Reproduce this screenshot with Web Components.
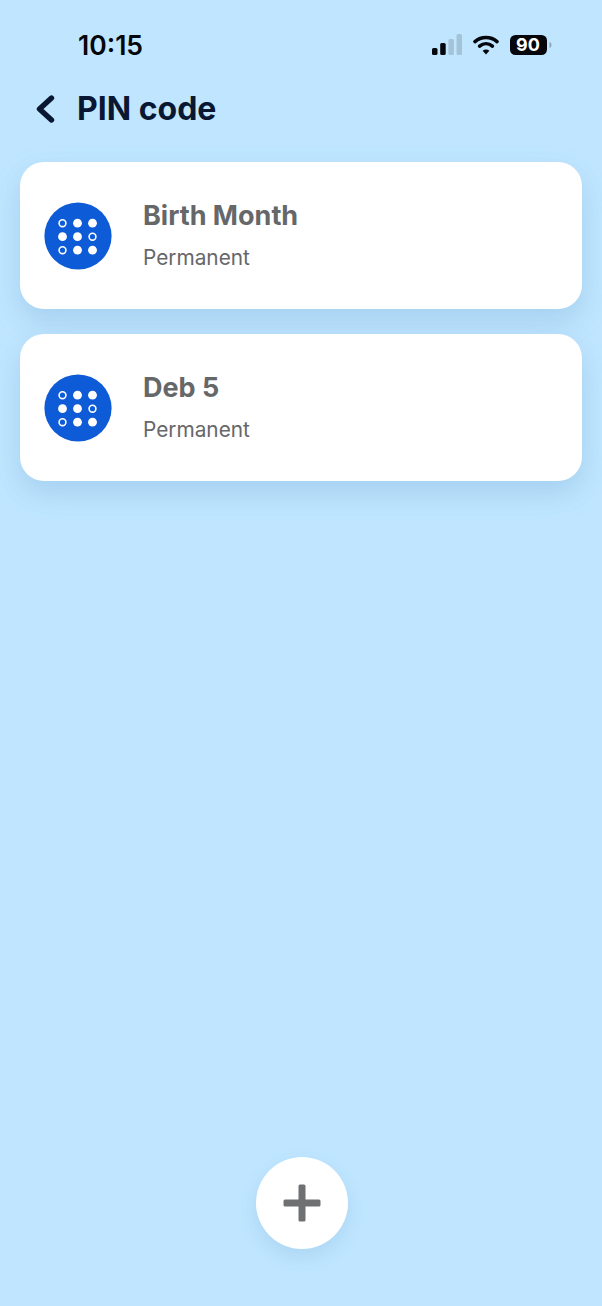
<!doctype html>
<html>
<head>
<meta charset="UTF-8" />
<style>
  html, body { margin: 0; height: 100%; }
  body { background: #c0e6ff; font-family: Inter, "Liberation Sans", sans-serif; }
</style>
</head>
<body>
<pin-screen>
  <status-bar slot="status" time="10:15" battery="90"></status-bar>
  <title-bar slot="title">PIN code</title-bar>
  <pin-card name="Birth Month" note="Permanent"></pin-card>
  <pin-card name="Deb 5" note="Permanent"></pin-card>
  <add-button slot="action"></add-button>
</pin-screen>

<script>
'use strict'

class PinScreen extends HTMLElement {
  constructor() {
    super();
    this.attachShadow({ mode: 'open' }).innerHTML = `
      <style>
        :host { display: flex; flex-direction: column; height: 1306px; box-sizing: border-box; padding-bottom: 57px; }
        .list { display: flex; flex-direction: column; gap: 25px; padding: 0 20px; }
        .action { margin-top: auto; display: flex; justify-content: center; padding-left: 2px; }
      </style>
      <slot name="status"></slot>
      <slot name="title"></slot>
      <div class="list"><slot></slot></div>
      <div class="action"><slot name="action"></slot></div>`;
  }
}

class StatusBar extends HTMLElement {
  constructor() {
    super();
    this.attachShadow({ mode: 'open' }).innerHTML = `
      <style>
        :host { display: flex; align-items: center; height: 30px; padding: 30px 50px 0 78px; color: #05070c; }
        .time { font-size: 26.5px; font-weight: 600; line-height: 30px; }
        .icons { margin-left: auto; display: flex; align-items: center; }
        svg { display: block; }
        .wifi { margin-left: 11px; }
        .battery { position: relative; margin-left: 11px; width: 42px; height: 20px; }
        .level { position: absolute; inset: 0; display: flex; align-items: center; justify-content: center;
                 padding-right: 6px; box-sizing: border-box; color: #fff; font: 700 18px/20px Inter, "Liberation Sans", sans-serif; }
      </style>
      <div class="time"></div>
      <div class="icons">
        <svg width="30" height="22" viewBox="0 0 30 22">
          <rect x="0" y="14" width="5.5" height="7" rx="1.5" fill="#05070c"/>
          <rect x="8.2" y="9" width="5.5" height="12" rx="1.5" fill="#05070c"/>
          <rect x="16.4" y="5" width="5.5" height="16" rx="1.5" fill="#a5c3d8"/>
          <rect x="24.5" y="0" width="5.5" height="21" rx="1.5" fill="#a5c3d8"/>
        </svg>
        <svg class="wifi" width="26" height="20" viewBox="0 0 26 20" fill="none" stroke="#05070c" stroke-width="3.6" stroke-linecap="round">
          <path d="M2 6.6C8.2 1.2 17.8 1.2 24 6.6"/>
          <path d="M6.6 11.2C10.4 8 15.6 8 19.4 11.2"/>
          <path d="M13 19.4L9.6 15.8C11.6 14.2 14.4 14.2 16.4 15.8Z" fill="#05070c" stroke="none"/>
        </svg>
        <div class="battery">
          <svg width="42" height="20" viewBox="0 0 42 20">
            <rect x="0" y="0" width="37" height="20" rx="5.5" fill="#05070c"/>
            <path d="M39.5 7C41 7.6 41.5 8.6 41.5 10C41.5 11.4 41 12.4 39.5 13Z" fill="#8fa3b2"/>
          </svg>
          <div class="level"></div>
        </div>
      </div>`;
  }
  connectedCallback() {
    this.shadowRoot.querySelector('.time').textContent = this.getAttribute('time');
    this.shadowRoot.querySelector('.level').textContent = this.getAttribute('battery');
  }
}

class TitleBar extends HTMLElement {
  constructor() {
    super();
    this.attachShadow({ mode: 'open' }).innerHTML = `
      <style>
        :host { display: flex; align-items: center; height: 38px; padding: 30px 0 34px 36px; color: #0a1733; }
        svg { display: block; }
        .text { margin-left: 22px; font-size: 32px; font-weight: 700; line-height: 38px; }
      </style>
      <svg width="19" height="28" viewBox="0 0 19 28" fill="none" stroke="#0a1733" stroke-width="5.4" stroke-linecap="round" stroke-linejoin="round">
        <path d="M15.5 3L3.5 14L15.5 25"/>
      </svg>
      <div class="text"><slot></slot></div>`;
  }
}

// 3x3 grid of the pin pad, some of the dots are rings
const PAD_RINGS = [0, 5, 6];

class PinIcon extends HTMLElement {
  constructor() {
    super();
    let dots = '';
    for (let i = 0; i < 9; i++) {
      const cx = 18.5 + (i % 3) * 15;
      const cy = 21.2 + Math.floor(i / 3) * 13.5;
      dots += PAD_RINGS.includes(i)
        ? `<circle cx="${cx}" cy="${cy}" r="3.4" fill="none" stroke="#fff" stroke-width="1.6"/>`
        : `<circle cx="${cx}" cy="${cy}" r="4.4" fill="#fff"/>`;
    }
    this.attachShadow({ mode: 'open' }).innerHTML = `
      <style>
        :host { display: block; width: 68px; height: 68px; flex: none; }
        svg { display: block; }
      </style>
      <svg width="68" height="68" viewBox="0 0 68 68">
        <circle cx="34" cy="34" r="33.6" fill="#0d5bd7"/>
        ${dots}
      </svg>`;
  }
}

class PinCard extends HTMLElement {
  constructor() {
    super();
    this.attachShadow({ mode: 'open' }).innerHTML = `
      <style>
        :host { display: flex; align-items: center; height: 147px; box-sizing: border-box; padding-left: 24px;
                background: #fff; border-radius: 24px; box-shadow: 0 12px 28px rgba(70, 130, 180, 0.22); }
        .text { margin-left: 31px; padding-bottom: 2px; color: #666769; display: flex; flex-direction: column; }
        .name { font-size: 27px; font-weight: 700; line-height: 32px; }
        .note { margin-top: 14px; font-size: 20.8px; line-height: 24px; }
      </style>
      <pin-icon></pin-icon>
      <div class="text"><div class="name"></div><div class="note"></div></div>`;
  }
  connectedCallback() {
    this.shadowRoot.querySelector('.name').textContent = this.getAttribute('name');
    this.shadowRoot.querySelector('.note').textContent = this.getAttribute('note');
  }
}

class AddButton extends HTMLElement {
  constructor() {
    super();
    this.attachShadow({ mode: 'open' }).innerHTML = `
      <style>
        :host { display: flex; align-items: center; justify-content: center; width: 92px; height: 92px;
                background: #fff; border-radius: 50%; box-shadow: 0 8px 20px rgba(70, 130, 180, 0.16); }
        svg { display: block; }
      </style>
      <svg width="38" height="38" viewBox="0 0 38 38" fill="#6f7072">
        <rect x="15.5" y="0.5" width="7" height="37" rx="1.5"/>
        <rect x="0.5" y="15.5" width="37" height="7" rx="1.5"/>
      </svg>`;
  }
}

customElements.define('pin-screen', PinScreen);
customElements.define('status-bar', StatusBar);
customElements.define('title-bar', TitleBar);
customElements.define('pin-icon', PinIcon);
customElements.define('pin-card', PinCard);
customElements.define('add-button', AddButton);
</script>
</body>
</html>
